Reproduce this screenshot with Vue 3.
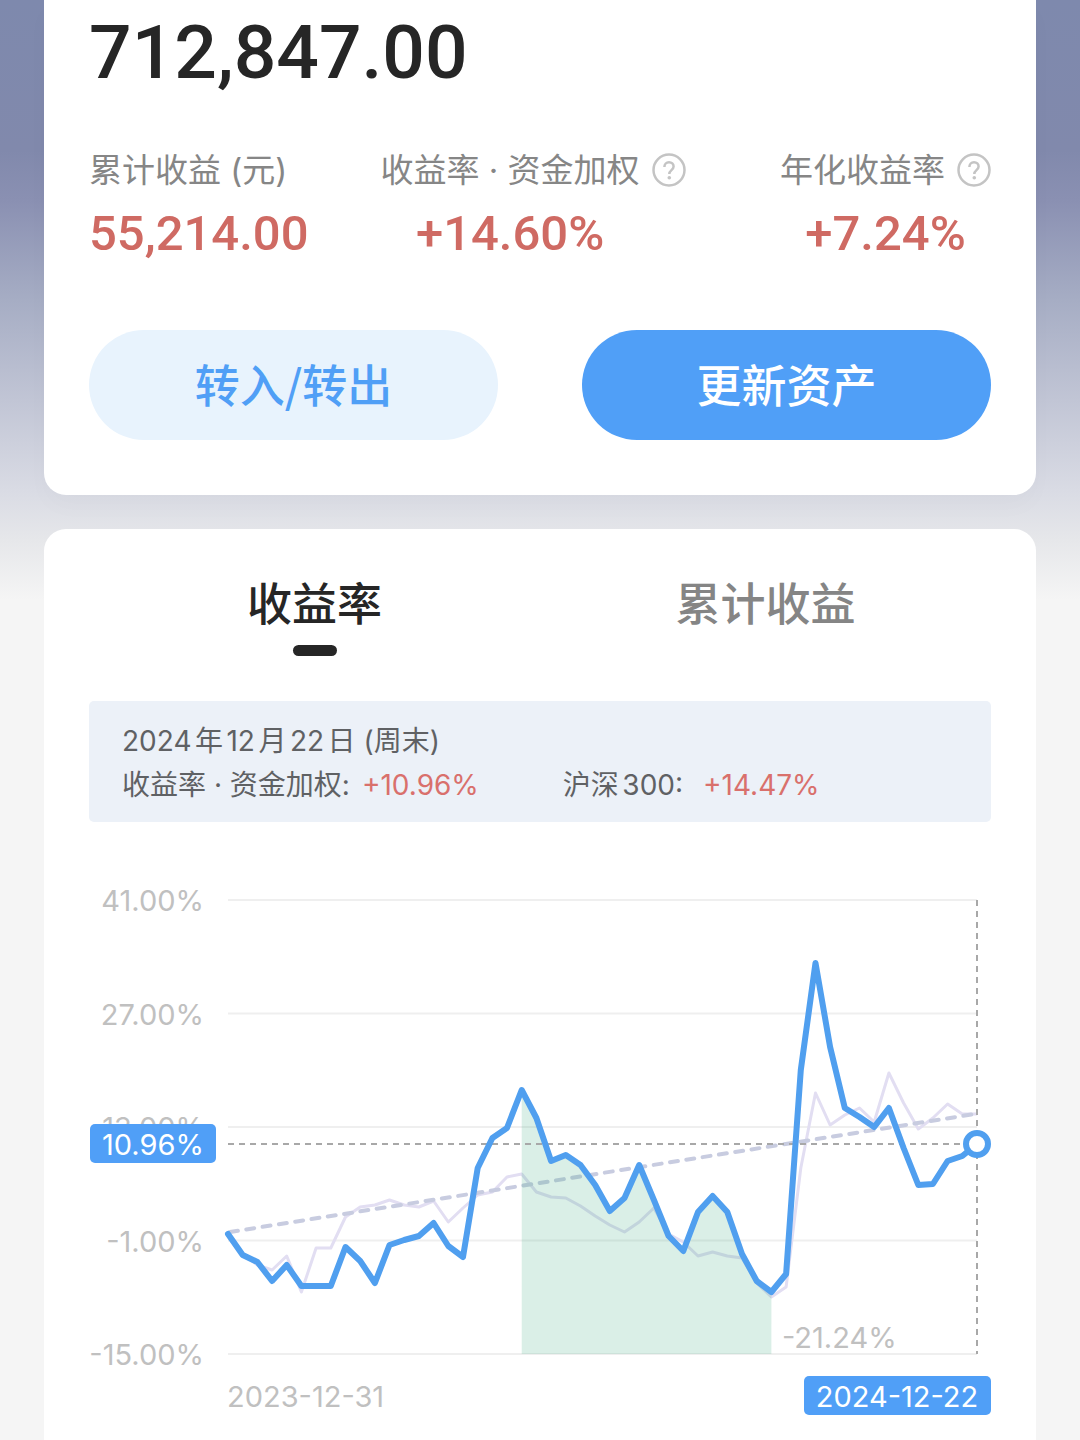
<script setup>
import { computed, ref } from 'vue';

const tabs = ['收益率', '累计收益'];
const activeTab = ref(0);

// chart geometry, in viewBox units
const LEFT = 139;
const RIGHT = 888;
const TOP = 40;
const BOTTOM = 494;

const ticks = ['41.00%', '27.00%', '13.00%', '-1.00%', '-15.00%'];

const rate = [
  374, 395, 402, 421, 405, 426, 426, 426, 387, 401, 423, 385, 380, 376, 363, 386, 397, 308,
  278, 268, 230, 258, 301, 295, 305, 325, 351, 338, 305, 340, 376, 391, 352, 336, 352, 394,
  421, 432, 414, 210, 103, 187, 248, 257, 267, 248, 288, 325, 324, 301, 296, 284,
];

const benchmark = [
  372, 394, 405, 410, 396, 432, 388, 388, 357, 347, 345, 340, 345, 347, 341, 362, 348, 335,
  332, 317, 314, 332, 337, 338, 346, 356, 365, 372, 362, 348, 374, 382, 396, 392, 396, 398,
  423, 437, 427, 308, 233, 265, 255, 248, 262, 213, 243, 269, 258, 244, 254, 254,
];

// max drawdown range, as indexes into rate
const drawdown = { from: 20, to: 37 };

const xAt = (i) => LEFT + ((RIGHT - LEFT) * i) / (rate.length - 1);
const tickY = (i) => TOP + ((BOTTOM - TOP) * i) / (ticks.length - 1);
const toPoints = (list, start = 0) =>
  list.map((y, i) => `${xAt(i + start).toFixed(1)},${y}`).join(' ');

const ratePoints = computed(() => toPoints(rate));
const benchmarkPoints = computed(() => toPoints(benchmark));
const drawdownPoints = computed(() => {
  const { from, to } = drawdown;
  const top = toPoints(rate.slice(from, to + 1), from);
  return `${xAt(from)},${BOTTOM} ${top} ${xAt(to)},${BOTTOM}`;
});
</script>

<template>
  <main class="page">
    <section class="card summary">
      <p class="amount">712,847.00</p>

      <div class="stats">
        <div class="stat">
          <span class="stat__label">累计收益 (元)</span>
          <strong class="stat__value">55,214.00</strong>
        </div>
        <div class="stat stat--middle">
          <span class="stat__label">收益率 · 资金加权</span>
          <button class="help" type="button" aria-label="收益率说明">
            <svg viewBox="0 0 34 34" aria-hidden="true">
              <circle cx="17" cy="17" r="15.5" />
              <path d="M12.4 14c0-2.8 1.9-4.700 4.600-4.700s4.600 1.800 4.600 4.300c0 3.400-4.300 3.800-4.300 7.300" />
              <circle class="help__dot" cx="17.3" cy="24.8" r="1.8" />
            </svg>
          </button>
          <strong class="stat__value">+14.60%</strong>
        </div>
        <div class="stat stat--last">
          <span class="stat__label">年化收益率</span>
          <button class="help" type="button" aria-label="年化收益率说明">
            <svg viewBox="0 0 34 34" aria-hidden="true">
              <circle cx="17" cy="17" r="15.5" />
              <path d="M12.4 14c0-2.8 1.9-4.700 4.600-4.700s4.600 1.800 4.600 4.300c0 3.400-4.300 3.800-4.300 7.300" />
              <circle class="help__dot" cx="17.3" cy="24.8" r="1.8" />
            </svg>
          </button>
          <strong class="stat__value">+7.24%</strong>
        </div>
      </div>

      <div class="actions">
        <button class="action" type="button">转入/转出</button>
        <button class="action action--primary" type="button">更新资产</button>
      </div>
    </section>

    <section class="card trend">
      <nav class="tabs">
        <button
          v-for="(tab, i) in tabs"
          :key="tab"
          type="button"
          :class="['tab', { 'tab--active': i === activeTab }]"
          @click="activeTab = i"
        >
          {{ tab }}
        </button>
      </nav>

      <div class="detail">
        <p class="detail__row">2024年12月22日 (周末)</p>
        <p class="detail__row">
          <span>收益率 · 资金加权:</span>
          <span class="detail__value">+10.96%</span>
          <span class="detail__index">沪深300:</span>
          <span class="detail__value detail__value--index">+14.47%</span>
        </p>
      </div>

      <svg class="chart" viewBox="0 0 902 580" role="img" aria-label="收益率">
        <g v-for="(tick, i) in ticks" :key="tick">
          <line class="chart__grid" :x1="LEFT" :x2="RIGHT" :y1="tickY(i)" :y2="tickY(i)" />
          <text class="chart__text" x="115" :y="tickY(i) + 11" text-anchor="end">{{ tick }}</text>
        </g>

        <polyline class="chart__benchmark" :points="benchmarkPoints" />
        <line class="chart__trend" :x1="LEFT + 2" y1="372" :x2="RIGHT - 2" y2="254" />
        <polygon class="chart__drawdown" :points="drawdownPoints" />
        <line class="chart__cursor" :x1="LEFT" :x2="RIGHT" y1="284" y2="284" />
        <line class="chart__cursor" :x1="RIGHT" :x2="RIGHT" :y1="TOP" :y2="BOTTOM" />
        <polyline class="chart__rate" :points="ratePoints" />
        <circle class="chart__marker" :cx="RIGHT" cy="284" r="11" />

        <text class="chart__text" x="693" y="488">-21.24%</text>
        <text class="chart__text" x="138" y="547">2023-12-31</text>

        <rect class="chart__tag" x="1" y="264" width="126" height="39" rx="5" />
        <text class="chart__text chart__text--tag" x="64" y="295" text-anchor="middle">10.96%</text>
        <rect class="chart__tag" x="715" y="516" width="187" height="39" rx="5" />
        <text class="chart__text chart__text--tag" x="808" y="547" text-anchor="middle">2024-12-22</text>
      </svg>
    </section>
  </main>
</template>

<style>
body {
  margin: 0;
  background: #f5f5f5;
}
</style>

<style scoped>
.page {
  display: flex;
  flex-direction: column;
  gap: 34px;
  box-sizing: border-box;
  min-height: 100vh;
  padding: 0 44px;
  overflow: hidden;
  font-family: Inter, 'Noto Sans CJK SC', sans-serif;
  color: #262626;
  background: linear-gradient(
    #7e89ad 0,
    #8189ac 150px,
    #8a90b2 200px,
    #a6adc4 300px,
    #c1c5d5 400px,
    #d9dbe4 490px,
    #e6e7ea 540px,
    #f5f5f5 600px
  );
}

.card {
  padding: 0 45px;
  background: #fff;
  border-radius: 22px;
}

.summary {
  padding-bottom: 55px;
  border-top-left-radius: 0;
  border-top-right-radius: 0;
  box-shadow: 0 12px 24px rgba(0, 0, 0, 0.02);
}

.trend {
  z-index: 1;
  flex: 1;
  border-bottom-left-radius: 0;
  border-bottom-right-radius: 0;
}

.amount {
  margin: 0;
  font-family: Roboto, 'Noto Sans CJK SC', sans-serif;
  font-size: 75px;
  font-weight: 500;
  line-height: 104px;
}

.stats {
  display: flex;
  gap: 60px;
  margin-top: 44px;
}

.stat {
  display: grid;
  grid-template-columns: auto auto;
  align-content: start;
  align-items: center;
  justify-content: start;
  column-gap: 12px;
}

.stat--last {
  margin-left: auto;
}

.stat__label {
  font-size: 33px;
  line-height: 44px;
  color: #868686;
  white-space: nowrap;
}

.stat__value {
  grid-column: 1;
  font-family: Roboto, 'Noto Sans CJK SC', sans-serif;
  font-size: 49px;
  font-weight: 500;
  line-height: 84px;
  color: #cf6a63;
}

.stat--middle .stat__value {
  text-align: center;
}

.stat--last .stat__value {
  grid-column: 1 / 3;
  text-align: center;
}

.help {
  width: 34px;
  height: 34px;
  padding: 0;
  border: 0;
  background: none;
}

.help svg {
  display: block;
  fill: none;
  stroke: #c4c4c4;
  stroke-width: 2.5;
}

.help .help__dot {
  fill: #c4c4c4;
  stroke: none;
}

.actions {
  display: grid;
  grid-template-columns: 1fr 1fr;
  gap: 84px;
  margin-top: 54px;
}

.action {
  height: 110px;
  padding: 0 0 4px;
  border: 0;
  border-radius: 55px;
  font-family: 'Noto Sans CJK SC', sans-serif;
  font-size: 45px;
  font-weight: 500;
  color: #509ff6;
  background: #e8f3fd;
}

.action--primary {
  color: #fff;
  background: #509ff7;
}

.tabs {
  display: grid;
  grid-template-columns: 1fr 1fr;
  padding-top: 40px;
}

.tab {
  display: flex;
  flex-direction: column;
  align-items: center;
  padding: 0;
  border: 0;
  font-family: 'Noto Sans CJK SC', sans-serif;
  font-size: 45px;
  font-weight: 500;
  line-height: 66px;
  color: #858585;
  background: none;
}

.tab--active {
  color: #262626;
}

.tab::after {
  content: '';
  width: 44px;
  height: 11px;
  margin-top: 10px;
  border-radius: 6px;
}

.tab--active::after {
  background: #262626;
}

.detail {
  margin-top: 45px;
  padding: 18px 33px 15px;
  border-radius: 5px;
  font-size: 28px;
  line-height: 44px;
  color: #5f6164;
  background: #ecf1f8;
  text-autospace: normal;
}

.detail__row {
  display: flex;
  margin: 0;
  white-space: nowrap;
}

.detail__value {
  margin-left: 12px;
  color: #d9706c;
}

.detail__index {
  margin-left: 84px;
}

.detail__value--index {
  margin-left: 20px;
}

.chart {
  display: block;
  width: 100%;
  margin-top: 38px;
  fill: none;
}

.chart__grid {
  stroke: #efefef;
  stroke-width: 2;
}

.chart__text {
  font-size: 29px;
  fill: #c0c0c0;
}

.chart__text--tag {
  fill: #fff;
}

.chart__tag {
  fill: #509ff7;
}

.chart__benchmark {
  stroke: #e2def2;
  stroke-width: 3;
  stroke-linejoin: round;
}

.chart__trend {
  stroke: #c8cce0;
  stroke-width: 4;
  stroke-linecap: round;
  stroke-dasharray: 8 8.5;
}

.chart__drawdown {
  fill: rgba(68, 174, 134, 0.2);
}

.chart__cursor {
  stroke: #a8a8a8;
  stroke-width: 2;
  stroke-dasharray: 6 5;
}

.chart__rate {
  stroke: #509fef;
  stroke-width: 6;
  stroke-linejoin: round;
  stroke-linecap: round;
}

.chart__marker {
  fill: #fff;
  stroke: #509fef;
  stroke-width: 6;
}
</style>
